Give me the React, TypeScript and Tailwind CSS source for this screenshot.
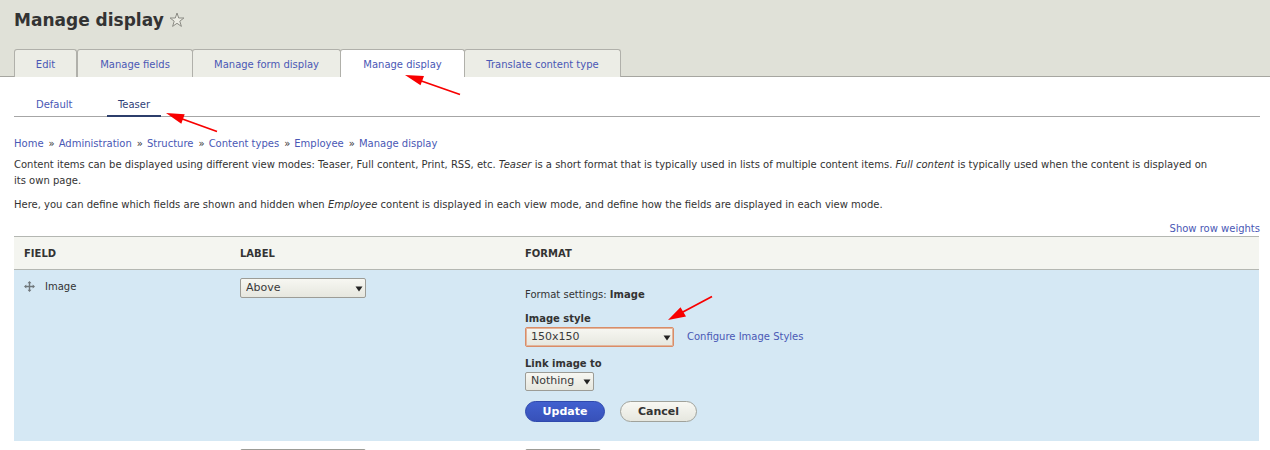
import type { ReactNode } from "react";

const tabs = [
  { label: "Edit", width: "w-[63px]" },
  { label: "Manage fields", width: "w-[116px]" },
  { label: "Manage form display", width: "w-[149px]" },
  { label: "Manage display", width: "w-[125px]", active: true },
  { label: "Translate content type", width: "w-[157px]" },
];

const crumbs = ["Home", "Administration", "Structure", "Content types", "Employee", "Manage display"];

function Link({ children }: { children: ReactNode }) {
  return (
    <a href="#" className="text-[#4a58b5] hover:underline">
      {children}
    </a>
  );
}

type SelectProps = { id: string; label?: string; value: string; className: string; frame?: string };

function Select({ id, label, value, className, frame = "border border-[#9c9c96]" }: SelectProps) {
  return (
    <div className={`relative ${className}`}>
      <select
        id={id}
        aria-label={label}
        className={`block h-full w-full appearance-none rounded-[2px] bg-linear-to-b from-[#f7f7f2] to-[#e6e7df] pb-px pl-[5px] text-[11px] leading-4 text-[#3a3a3a] outline-none ${frame}`}
      >
        <option>{value}</option>
      </select>
      <svg viewBox="0 0 8 6" className="pointer-events-none absolute right-[3px] bottom-[6px] h-[6px] w-2" aria-hidden="true">
        <path d="M0.5 0.5h7L4 5.5z" fill="#222" />
      </svg>
    </div>
  );
}

function Arrows() {
  return (
    <svg
      viewBox="0 0 720 340"
      className="pointer-events-none absolute top-0 left-0 z-20 h-[340px] w-[720px]"
      fill="#f80000"
      stroke="#f80000"
      aria-hidden="true"
    >
      <path d="M420 80.5L460 94.5M181 118.5L217 131.5M681 313L712 296.5" strokeWidth="1.8" fill="none" />
      <path d="M405 75L424 76L420.5 85.3zM166 113L184.7 114.2L181.3 123.8zM668 320L680.5 307.2L686 316.4z" stroke="none" />
    </svg>
  );
}

export default function App() {
  return (
    <div className="relative min-h-screen bg-white font-['DejaVu_Sans',sans-serif] text-[10px] leading-4 text-[#333]">
      <header className="border-b border-[#a6a6a0] bg-[#e0e1d8] px-[14px] pt-2">
        <div className="flex items-center gap-[5px]">
          <h1 className="text-[17px] leading-6 font-bold">Manage display</h1>
          <button type="button" aria-label="Add to shortcuts">
            <svg viewBox="0 0 16 16" className="block size-4" aria-hidden="true">
              <path
                d="M8 1L9.7 6H14.9L10.8 9.2L12.4 14.4L8 11.3L3.6 14.4L5.2 9.2L1.1 6H6.3z"
                fill="#ecece4"
                stroke="#8b8b84"
                strokeWidth="1"
                strokeLinejoin="round"
              />
            </svg>
          </button>
        </div>
        <nav className="mt-[17px] -mb-px flex" aria-label="Primary tabs">
          {tabs.map((tab) => (
            <a
              key={tab.label}
              href="#"
              className={`-mr-px h-7 rounded-t-[3px] border border-b-0 border-[#b0b0aa] pt-[7px] text-center whitespace-nowrap text-[#4a58b5] first:mr-0 ${tab.width} ${
                tab.active ? "z-10 bg-white" : "border-b bg-[#ecede6]"
              }`}
            >
              {tab.label}
            </a>
          ))}
        </nav>
      </header>

      <main className="pr-[10px] pl-[14px]">
        <nav className="mt-5 flex h-5 gap-[11px] border-b border-[#a6a6a6] pl-[11px]" aria-label="Secondary tabs">
          <a href="#" className="h-5 w-[71px] pl-[11px] text-[#4a58b5]">
            Default
          </a>
          <a href="#" className="h-5 w-[54px] border-b-2 border-[#2c3e6b] text-center text-[#2f3f78]">
            Teaser
          </a>
        </nav>

        <nav className="mt-[19px] flex gap-[5px]" aria-label="Breadcrumb">
          {crumbs.map((crumb, i) => (
            <span key={crumb} className="flex gap-1">
              {i > 0 && <span>»</span>}
              <Link>{crumb}</Link>
            </span>
          ))}
        </nav>

        <p className="mt-[5px] pr-12">
          Content items can be displayed using different view modes: Teaser, Full content, Print, RSS, etc. <em>Teaser</em> is a
          short format that is typically used in lists of multiple content items. <em>Full content</em> is typically used when the
          content is displayed on its own page.
        </p>
        <p className="mt-2">
          Here, you can define which fields are shown and hidden when <em>Employee</em> content is displayed in each view mode, and
          define how the fields are displayed in each view mode.
        </p>

        <div className="mt-2 flex justify-end">
          <button type="button" className="leading-[15px] text-[#4a58b5]">
            Show row weights
          </button>
        </div>

        <div className="pr-px">
          <table className="w-full table-fixed border-collapse text-left">
            <thead>
              <tr className="h-[33px] border-y border-[#b4b7b2] bg-[#f4f5f0] uppercase">
                <th className="w-[216px] px-[10px] pt-0.5">Field</th>
                <th className="w-[285px] px-[10px] pt-0.5">Label</th>
                <th className="px-[10px] pt-0.5">Format</th>
              </tr>
            </thead>
            <tbody>
              <tr className="h-[171px] bg-[#d5e8f4] align-top">
                <td className="px-[10px] pt-[9px]">
                  <div className="flex items-start gap-[10px]">
                    <svg viewBox="0 0 11 11" className="mt-0.5 size-[11px]" aria-hidden="true">
                      <path d="M5.5 1.5V9.5M1.5 5.5H9.5" stroke="#70777b" strokeWidth="1.4" />
                      <path
                        d="M5.5 0L7.5 2.3H3.5zM5.5 11L7.5 8.7H3.5zM0 5.5L2.3 3.5V7.5zM11 5.5L8.7 3.5V7.5z"
                        fill="#70777b"
                      />
                    </svg>
                    <span>Image</span>
                  </div>
                </td>
                <td className="px-[10px] pt-2">
                  <Select id="image-label" label="Label" value="Above" className="h-5 w-[126px]" />
                </td>
                <td className="px-[10px] pt-[17px]">
                  <p>
                    Format settings: <strong>Image</strong>
                  </p>
                  <label htmlFor="image-style" className="mt-2 block font-bold">
                    Image style
                  </label>
                  <div className="flex items-center gap-[13px]">
                    <Select
                      id="image-style"
                      value="150x150"
                      className="h-5 w-[149px]"
                      frame="border border-[#d98d68] ring-1 ring-inset ring-[#e3b59c]"
                    />
                    <Link>Configure Image Styles</Link>
                  </div>
                  <label htmlFor="image-link" className="mt-[9px] block font-bold">
                    Link image to
                  </label>
                  <Select id="image-link" value="Nothing" className="h-[19px] w-[69px]" />
                  <div className="mt-[10px] flex gap-[15px] text-[11px] font-bold">
                    <button
                      type="button"
                      className="h-[21px] w-20 rounded-full border border-[#2f49ad] bg-linear-to-b from-[#4160cf] to-[#3751b9] leading-4 text-white"
                    >
                      Update
                    </button>
                    <button
                      type="button"
                      className="h-[21px] w-[77px] rounded-full border border-[#a0a29b] bg-linear-to-b from-[#f8f8f3] to-[#e6e7df] leading-4"
                    >
                      Cancel
                    </button>
                  </div>
                </td>
              </tr>
              <tr className="align-top">
                <td />
                <td className="px-[10px] pt-2">
                  <Select id="next-label" label="Label" value="" className="h-5 w-[126px]" />
                </td>
                <td className="px-[10px] pt-2">
                  <Select id="next-format" label="Format" value="" className="h-5 w-[76px]" />
                </td>
              </tr>
            </tbody>
          </table>
        </div>
      </main>
      <Arrows />
    </div>
  );
}
